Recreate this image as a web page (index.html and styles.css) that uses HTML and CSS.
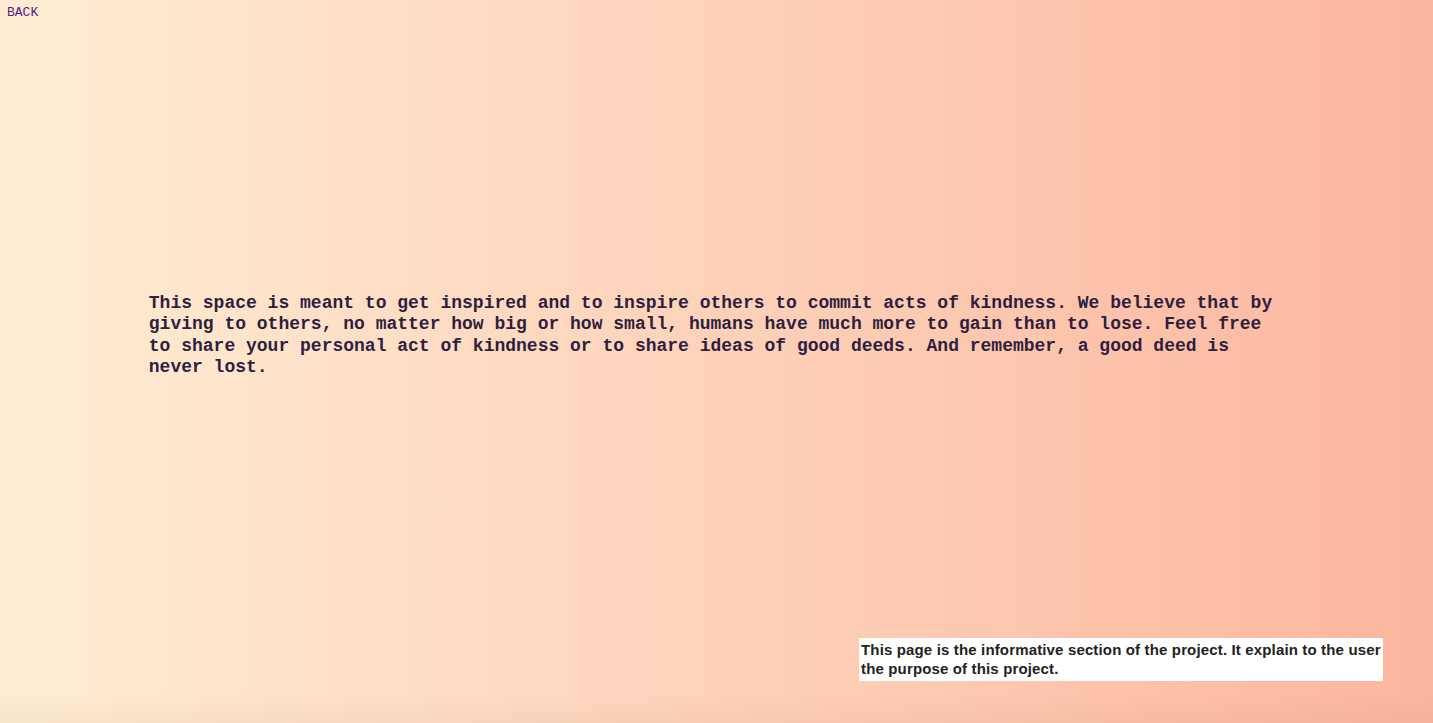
FILE: index.html
```html
<!DOCTYPE html>
<html lang="en">
<head>
<meta charset="utf-8">
<title>About</title>
<link rel="stylesheet" href="styles.css">
</head>
<body>
<div class="page">
  <nav class="top"><a class="back" href="#">BACK</a></nav>
  <main class="intro">
    <p>This space is meant to get inspired and to inspire others to commit acts of kindness. We believe that by giving to others, no matter how big or how small, humans have much more to gain than to lose. Feel free to share your personal act of kindness or to share ideas of good deeds. And remember, a good deed is never lost.</p>
  </main>
  <footer class="foot">
    <p class="note">This page is the informative section of the project. It explain to the user the purpose of this project.</p>
  </footer>
</div>
</body>
</html>
```
FILE: styles.css
```css
html {
  height: 100%;
}
body {
  margin: 0;
  min-height: 100%;
  background: linear-gradient(to right, #ffecd2 0%, #ffecd2 3%, #fcb69f 100%);
  font-family: "Courier New", "Nimbus Mono PS", "FreeMono", "Liberation Mono", monospace;
}
.page {
  min-height: 723px;
  box-sizing: border-box;
  padding: 6px 8px 8px 7px;
  display: flex;
  flex-direction: column;
  background: linear-gradient(to bottom, rgba(0,0,0,0) 96%, rgba(120,80,40,0.05) 100%);
}
.top {
  font-size: 13px;
  line-height: 13px;
}
.back {
  color: #551a8b;
  text-decoration: none;
}
.intro {
  width: 80%;
  margin: 274px auto 0;
}
.intro p {
  margin: 0;
  font-size: 18px;
  line-height: 21.3px;
  font-weight: bold;
  color: #2e1f3f;
}
.foot {
  margin-top: auto;
  display: flex;
  justify-content: flex-end;
  padding: 0 42px 34px 0;
}
.note {
  margin: 0;
  width: 520px;
  background: #ffffff;
  padding: 2px 2px 3px 2px;
  font-family: "Liberation Sans", Arial, sans-serif;
  font-weight: bold;
  font-size: 15px;
  line-height: 19px;
  letter-spacing: 0.15px;
  color: #222222;
}
```
